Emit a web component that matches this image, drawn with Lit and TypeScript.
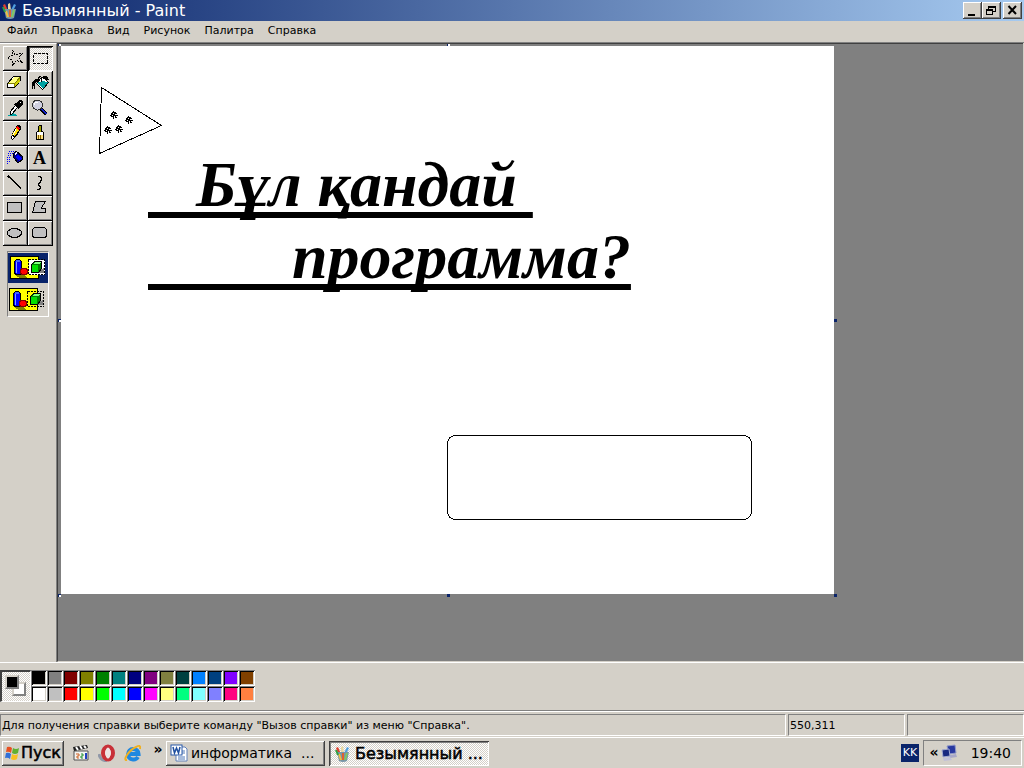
import { LitElement, html, svg, css } from "lit";
import { customElement, state } from "lit/decorators.js";

const MENUS = ["Файл", "Правка", "Вид", "Рисунок", "Палитра", "Справка"];

const COLORS = [
  ["#000000", "#808080", "#800000", "#808000", "#008000", "#008080", "#000080", "#800080", "#808040", "#004040", "#0080ff", "#004080", "#8000ff", "#804000"],
  ["#ffffff", "#c0c0c0", "#ff0000", "#ffff00", "#00ff00", "#00ffff", "#0000ff", "#ff00ff", "#ffff80", "#00ff80", "#80ffff", "#8080ff", "#ff0080", "#ff8040"],
];

const TOOLS = [
  { name: "Выделение произвольной области", art: svg`<path d="M9.5 4.5 12 8.5 19.5 7.500 15.500 11.500 19 16.500 13.500 14.500 9.500 19.500V14.500L4.500 11.500 9.500 9.500Z" fill="none" stroke="#000" stroke-dasharray="2 1"/>` },
  { name: "Выделение", art: svg`<rect x="5.500" y="7.500" width="14" height="10" fill="none" stroke="#000" stroke-dasharray="3 1"/>` },
  { name: "Ластик", art: svg`<path d="M10.500 5.500H17.500V9.500L11.500 16.500H4.500V12.500Z" fill="#fff" stroke="#000"/><path d="M11 6H17L12 12H6Z" fill="#ffff80"/><path d="M12 12 17 7V10L12 15Z" fill="#d0d000"/><path d="M5 12.500H11.500L17 6.500M11.500 12.500V16" stroke="#808000" fill="none"/>` },
  { name: "Заливка", art: svg`<path d="M12.500 7.500 15.500 5.500 20.500 11.500 14.500 18.500 8.500 12.500Z" fill="#fff" stroke="#000"/><path d="M9 12 14 10 20 11 15 18Z" fill="#00a0a0"/><path d="M4 18V11L7 8H12L8 11 7 14V18H6V13L5 18Z"/><path d="M10.500 11V6.500L12.500 5.500 13.500 7V11" fill="none" stroke="#000"/><path d="M15 7 18 6 20 9" fill="none" stroke="#000" stroke-width="2"/>` },
  { name: "Выбор цветов", art: svg`<path d="M4 19H7V17H10L14 19V20H5Z" fill="#00a0a0"/><path d="M7 18V16L13 9 15 11 9 18Z" fill="#fff" stroke="#000"/><path d="M11 8 13 7 16 4H18L20 6V8L17 11 16 13H15Z"/><path d="M17 6H18" stroke="#fff"/>` },
  { name: "Масштаб", art: svg`<path d="M13 13 18.500 18.500" stroke="#000" stroke-width="4"/><path d="M13.500 13 18.500 18" stroke="#1020d0" stroke-width="2"/><circle cx="9.500" cy="9" r="5" fill="#d0d0e0" stroke="#303030"/><path d="M6.500 9Q6.500 6 9.500 6" stroke="#fff" fill="none"/>` },
  { name: "Карандаш", art: svg`<path d="M14 4H16L18 6V8L13 16 9 19 8 18 9 13Z"/><path d="M13 7 16 9 12 15 9 14Z" fill="#ffe000"/><path d="M14 5 17 7 16 9 13 7Z" fill="#ff0000"/><path d="M13 8 10 14" stroke="#fff"/><path d="M9 15 11 16 9 18Z" fill="#fff"/>` },
  { name: "Кисть", art: svg`<path d="M10.500 10V6L11.500 4.500H13L13.500 6V10L15.500 12V18.500H8.500V12Z" fill="#a0a000" stroke="#000"/><rect x="9" y="11" width="6" height="3" fill="#fff"/><path d="M9 14H15V18H9Z" fill="#ffe080"/><path d="M10.500 14V18M12.500 14V18" stroke="#806000"/>` },
  { name: "Распылитель", art: svg`<path d="M6 5H12M5 7H11M5 9H9M4 11H8M4 13H7M4 15H7M4 17H6" stroke="#0000ff" stroke-dasharray="1 1"/><path d="M10 8 13 5 20 11 19 14 15 17 11 12Z" fill="#000080" stroke="#000"/><path d="M13 10 15 9 19 12 16 15 13 12Z" fill="#0000ff"/><path d="M12 8 14 7" stroke="#fff" stroke-width="2"/>` },
  { name: "Надпись", letter: "A" },
  { name: "Линия", art: svg`<path d="M5 5 18 17.500" stroke="#000" stroke-width="1.500"/>` },
  { name: "Кривая", art: svg`<path d="M10 5H12V6H13V9H12V11H11V12H10V14H11V15H12V17H11V18H9" fill="none" stroke="#000"/>` },
  { name: "Прямоугольник", art: svg`<rect x="4.500" y="6.500" width="14" height="10" fill="#c0c0c0" stroke="#000"/>` },
  { name: "Многоугольник", art: svg`<path d="M7.500 5.500H17.500L13.500 11.500V12.500H17.500V16.500H4.500Z" fill="#c0c0c0" stroke="#000"/>` },
  { name: "Эллипс", art: svg`<ellipse cx="11.500" cy="12" rx="7" ry="4.500" fill="#c0c0c0" stroke="#000"/>` },
  { name: "Скругленный прямоугольник", art: svg`<rect x="4.500" y="6.500" width="14" height="10" rx="3" fill="#c0c0c0" stroke="#000"/>` },
];

const shapes = (opaque: boolean) => svg`
  <rect x="2.500" y="3.500" width="28" height="22" fill="#ffff00" stroke="#000"/>
  <path d="M7 22H16L19 25H12Z" fill="#808000"/>
  <rect x="6.500" y="6.500" width="7" height="15" rx="3" fill="#0000ff" stroke="#000"/>
  <path d="M8.500 9V20" stroke="#80a0ff"/><ellipse cx="10" cy="8" rx="2.500" ry="1.500" fill="#4060ff"/>
  <circle cx="16" cy="18.500" r="3.500" fill="#ff0000" stroke="#800000"/>
  <rect x="20.500" y="6.500" width="16" height="15" fill=${opaque ? "#fff" : "none"} stroke="#000" stroke-dasharray="2 1"/>
  <path d="M27 20H36V15L32 17Z" fill="#808080"/>
  <path d="M23.500 11.500 26.500 8.500H33.500V15.500L30.500 19.500H23.500Z" fill="#008000" stroke="#000"/>
  <rect x="24" y="12" width="6" height="7" fill="#00e000"/><path d="M25 11 27 9H33L31 11Z" fill="#80ff80"/>`;

const cup = html`<svg class="icon" viewBox="0 0 16 16" aria-hidden="true">
  <path d="M3 8 1 2 3 1 6 8Z" fill="#e04030"/><path d="M6 7V1L8 0 9 7Z" fill="#e8d8a0"/><path d="M9 7 12 1 14 2 11 8Z" fill="#50a0e0"/>
  <path d="M2 6H14L12 15Q8 17 4 15Z" fill="#7896a8"/><path d="M4 8 6 14" stroke="#f0c040" stroke-width="2"/><path d="M8 7V14" stroke="#e06030" stroke-width="2"/><path d="M12 7 10 14" stroke="#80c860" stroke-width="2"/><path d="M1 4 3 9" stroke="#30a040" stroke-width="2"/></svg>`;

@customElement("app-root")
export class AppRoot extends LitElement {
  @state() private tool = 1;
  @state() private opaque = true;
  @state() private ink = "#000000";

  static styles = css`
    :host { display: flex; flex-direction: column; height: 100vh; overflow: hidden; background: #d4d0c8; color: #000; font: 11px/14px "DejaVu Sans", sans-serif; }
    * { box-sizing: border-box; }
    button { font: inherit; color: inherit; background: #d4d0c8; border: 0; padding: 0; margin: 0; }
    svg { display: block; flex: none; }
    .icon { width: 16px; height: 16px; }
    .title { display: flex; align-items: center; height: 21px; padding: 0 2px; background: linear-gradient(90deg, #0a246a, #a6caf0); color: #fff; }
    .title h1 { flex: 1; margin: 0 0 0 4px; font-size: 16px; line-height: 20px; font-weight: 400; }
    .win { width: 19px; height: 17px; box-shadow: inset -1px -1px #404040, inset 1px 1px #fff, inset -2px -2px #808080; }
    .win.close { margin-left: 2px; }
    .menu { display: flex; height: 21px; }
    .menu button { padding: 0 7px 2px; }
    .work { flex: 1; min-height: 0; display: flex; border-top: 1px solid #808080; }
    .tools { width: 57px; padding: 3px; border-top: 1px solid #fff; border-right: 1px solid #808080; padding-top: 2px; }
    .grid { display: grid; grid-template-columns: 25px 25px; }
    .tool { width: 25px; height: 25px; box-shadow: inset -1px -1px #000, inset 1px 1px #fff, inset -2px -2px #808080; }
    .tool.on { box-shadow: inset 1px 1px #000, inset -1px -1px #fff, inset 2px 2px #404040; background: repeating-conic-gradient(#fff 0 25%, #d4d0c8 0 50%) 0 0 / 2px 2px; }
    .letter { font: bold 18px/22px "Liberation Serif", serif; display: block; padding: 0 2px 2px 0; }
    .opts { width: 42px; margin: 5px 4px; border: 1px solid; border-color: #808080 #fff #fff #808080; padding: 1px 0 3px; }
    .opt { display: block; width: 40px; height: 30px; }
    .opt.on { background: #0a246a; }
    .desk { flex: 1; min-width: 0; margin-right: 1px; padding: 2px 0 0 3px; background: #808080; border: solid #404040; border-width: 1px 0 0 1px; border-bottom: 1px solid #d4d0c8; overflow: hidden; }
    .canvas { position: relative; width: 773px; height: 548px; background: #fff; }
    .words { position: absolute; left: 87px; top: 103px; margin: 0; white-space: pre; font: italic bold 64px/72px "Liberation Serif", serif; text-decoration: underline 6px; text-underline-offset: 6px; text-decoration-skip-ink: none; }
    .drawing { position: absolute; left: 0; top: 0; }
    .handle { position: absolute; width: 3px; height: 3px; background: #0a246a; }
    .handle.open { background: #fff; border: solid #0a246a; border-width: 1px 0 0 1px; }
    .n { top: -3px; } .m { top: 273px; } .s { top: 548px; }
    .w { left: -3px; } .c { left: 386px; } .e { left: 773px; }
    .palette { display: flex; height: 49px; padding-top: 7px; border-top: 1px solid #fff; border-bottom: 1px solid #808080; }
    .current { position: relative; width: 31px; height: 32px; border: solid; border-width: 2px 1px 1px 2px; border-color: #404040 #fff #fff #404040; background: repeating-conic-gradient(#fff 0 25%, #d4d0c8 0 50%) 0 0 / 2px 2px; }
    .chip { position: absolute; width: 14px; height: 14px; border: 2px solid; border-color: #d4d0c8 #808080 #808080 #d4d0c8; }
    .front { left: 3px; top: 3px; } .back { left: 10px; top: 10px; background: #fff; }
    .swatches { display: grid; grid-template-columns: repeat(14, 16px); grid-auto-rows: 16px; }
    .swatch { width: 16px; height: 16px; box-shadow: inset 1px 1px #808080, inset -1px -1px #fff, inset 2px 2px #000, inset -2px -2px #d4d0c8; }
    .status { display: grid; grid-template-columns: 1fr 117px 117px; gap: 2px; height: 26px; padding: 2px 0 1px; border-top: 1px solid #fff; }
    .pane { border: 1px solid; border-color: #808080 #fff #fff #808080; padding: 4px 1px; white-space: nowrap; overflow: hidden; }
    .taskbar { display: flex; align-items: center; height: 31px; padding: 0 2px; border-top: 1px solid #fff; font-size: 14px; line-height: 20px; white-space: nowrap; }
    .raised { display: flex; align-items: center; height: 25px; padding: 0 3px; box-shadow: inset -1px -1px #404040, inset 1px 1px #fff, inset -2px -2px #808080; }
    .start { width: 62px; gap: 1px; padding: 0 2px; font-size: 16px; -webkit-text-stroke: 0.5px #000; }
    .quick { display: flex; gap: 8px; margin-left: 8px; }
    .quick button { width: 18px; height: 18px; }
    .more { width: 12px; margin: 0 2px 8px 10px; font-weight: bold; line-height: 12px; }
    .task { width: 159px; gap: 3px; padding: 0 4px; margin-right: 4px; }
    .task span { flex: 1; text-align: left; white-space: pre; }
    .task.on { width: 160px; gap: 4px; padding: 2px 6px 0; font-size: 16px; box-shadow: inset 1px 1px #404040, inset -1px -1px #fff, inset 2px 2px #808080; background: repeating-conic-gradient(#fff 0 25%, #d4d0c8 0 50%) 0 0 / 2px 2px; -webkit-text-stroke: 0.5px #000; }
    .lang { margin-left: auto; width: 18px; height: 18px; background: #0a246a; color: #fff; font-size: 11px; line-height: 18px; text-align: center; }
    .tray { display: flex; align-items: center; margin-left: 4px; width: 99px; height: 26px; padding: 0 10px 0 4px; border: 1px solid; border-color: #808080 #fff #fff #808080; }
    .tray button { width: 12px; font-weight: bold; line-height: 14px; margin-bottom: 2px; }
    .tray time { margin-left: auto; }
  `;

  private spot(x: number, y: number) {
    return svg`<g transform="translate(${x} ${y})"><path d="M2 1H3V0H4V1H6V2H7V3H6V4H8V5H6V6H7V7H5V6H4V8H3V6H1V5H0V4H1V2H2Z"/><path d="M3 2H4V3H3ZM2 4H3V5H2ZM5 3H6V4H5ZM4 5H5V6H4Z" fill="#fff"/></g>`;
  }

  render() {
    return html`
      <header class="title">
        ${cup}
        <h1>Безымянный - Paint</h1>
        <button class="win" aria-label="Свернуть"><svg width="19" height="17"><path d="M5 12H12V14H5Z"/></svg></button>
        <button class="win" aria-label="Восстановить"><svg width="19" height="17" shape-rendering="crispEdges"><path d="M6.500 7V4.500H13.500V9.500H11M6 4H14M4.500 7.500H10.500V12.500H4.500ZM4 8.500H11M6 5.500H14" fill="none" stroke="#000"/></svg></button>
        <button class="win close" aria-label="Закрыть"><svg width="19" height="17"><path d="M5.500 4 13 12M13 4 5.500 12" stroke="#000" stroke-width="2"/></svg></button>
      </header>
      <nav class="menu">${MENUS.map((m) => html`<button>${m}</button>`)}</nav>
      <main class="work">
        <aside class="tools">
          <div class="grid">
            ${TOOLS.map((t, i) => html`<button class="tool ${i === this.tool ? "on" : ""}" aria-label=${t.name} aria-pressed=${i === this.tool} @click=${() => (this.tool = i)}>
              ${t.letter ? html`<span class="letter">${t.letter}</span>` : html`<svg width="25" height="25" shape-rendering="crispEdges">${t.art}</svg>`}
            </button>`)}
          </div>
          <div class="opts">
            ${[true, false].map((o) => html`<button class="opt ${o === this.opaque ? "on" : ""}" aria-label=${o ? "Непрозрачный фон" : "Прозрачный фон"} @click=${() => (this.opaque = o)}>
              <svg width="40" height="30" viewBox=${o ? "0 0 40 30" : "1 -2 40 30"} shape-rendering="crispEdges">${shapes(o)}</svg>
            </button>`)}
          </div>
        </aside>
        <section class="desk">
          <div class="canvas">
            <p class="words">${"   Бұл қандай \n         программа?"}</p>
            <svg class="drawing" width="773" height="548" shape-rendering="crispEdges" aria-hidden="true">
              <path d="M40.500 41.500 100.500 79.500 38.500 107.500Z" fill="none" stroke="#000"/>
              ${this.spot(49, 65)}${this.spot(64, 70)}${this.spot(43, 80)}${this.spot(54, 79)}
              <rect x="386.500" y="389.500" width="304" height="84" rx="8" fill="none" stroke="#000"/>
            </svg>
            <i class="handle open n w"></i><i class="handle open n c"></i>
            <i class="handle open m w"></i><i class="handle m e"></i>
            <i class="handle open s w"></i><i class="handle s c"></i><i class="handle s e"></i>
          </div>
        </section>
      </main>
      <section class="palette">
        <div class="current"><i class="chip back"></i><i class="chip front" style="background:${this.ink}"></i></div>
        <div class="swatches">
          ${COLORS.flat().map((c) => html`<button class="swatch" aria-label=${c} style="background:${c}" @click=${() => (this.ink = c)}></button>`)}
        </div>
      </section>
      <section class="status">
        <div class="pane">Для получения справки выберите команду "Вызов справки" из меню "Справка".</div>
        <div class="pane">550,311</div>
        <div class="pane"></div>
      </section>
      <footer class="taskbar">
        <button class="raised start">
          <svg class="icon" viewBox="0 0 16 16" aria-hidden="true"><path d="M3 2Q6 1 8 3L7 8Q5 6 2 7Z" fill="#e85020"/><path d="M9 3Q12 5 15 3L14 8Q11 10 8 8Z" fill="#60b030"/><path d="M2 8Q5 7 7 9L6 14Q4 12 1 13Z" fill="#3070d8"/><path d="M8 9Q11 11 14 9L13 14Q10 16 7 14Z" fill="#f8c020"/></svg>Пуск</button>
        <div class="quick">
          <button aria-label="Проигрыватель"><svg width="18" height="18"><path d="M2 7H16V16H2Z" fill="#f4f4f0" stroke="#505050"/><path d="M1 3 15 1 16 4 2 7Z" fill="#202020"/><path d="M4 3 6 6M8 2 10 5M12 2 14 4" stroke="#fff" stroke-width="2"/><path d="M4 10H7V12H5V14H7" stroke="#d06020" fill="none"/><path d="M9 10H11V12H9V14H11" stroke="#209030" fill="none"/><path d="M14 9V15" stroke="#2040c0" stroke-width="2"/></svg></button>
          <button aria-label="Opera"><svg width="18" height="18"><path d="M1 10Q2 16 9 17" stroke="#9098a8" fill="none" stroke-width="3"/><ellipse cx="10" cy="9" rx="5" ry="6.500" fill="#f4e8e8" stroke="#c83038" stroke-width="4"/><ellipse cx="10" cy="9" rx="2.500" ry="5.500" fill="#ece4e4"/></svg></button>
          <button aria-label="Internet Explorer"><svg width="18" height="18"><path d="M14 13Q12 16 9 15.500C2 15 3 5 9 5Q14 5 14.500 10H6" fill="none" stroke="#2088e0" stroke-width="4"/><path d="M3 16C-2 17 5 6 12 3Q17 0 16 5" fill="none" stroke="#f0b020" stroke-width="2"/></svg></button>
        </div>
        <button class="more" aria-label="Другие значки">»</button>
        <button class="raised task">
          <svg width="18" height="18" aria-hidden="true"><path d="M8 3H15L17 5V17H6V3Z" fill="#fff" stroke="#6080b8"/><path d="M12 7H15M12 9H15M8 13H15M8 15H15" stroke="#5078b8"/><rect x="1" y="1" width="11" height="10" fill="#fff" stroke="#2858a8"/><path d="M3 3 4.500 9 6.500 4 8.500 9 10 3" fill="none" stroke="#2050a0" stroke-width="1.500"/></svg>
          <span>информатика  ...</span></button>
        <button class="raised task on">${cup}<span>Безымянный ...</span></button>
        <span class="lang">KK</span>
        <div class="tray">
          <button aria-label="Показать скрытые значки">«</button>
          <svg width="18" height="18" aria-hidden="true"><path d="M7 2 15 1 16 9 9 10Z" fill="#2838a0" stroke="#9098c8"/><path d="M10 11 16 10 17 13 10 14Z" fill="#a8a8c8"/><path d="M2 6 9 5 10 12 3 13Z" fill="#182880" stroke="#a0a8d0"/><path d="M3 14 10 13 12 16 4 17Z" fill="#c0c0d8"/></svg>
          <time>19:40</time>
        </div>
      </footer>`;
  }
}
